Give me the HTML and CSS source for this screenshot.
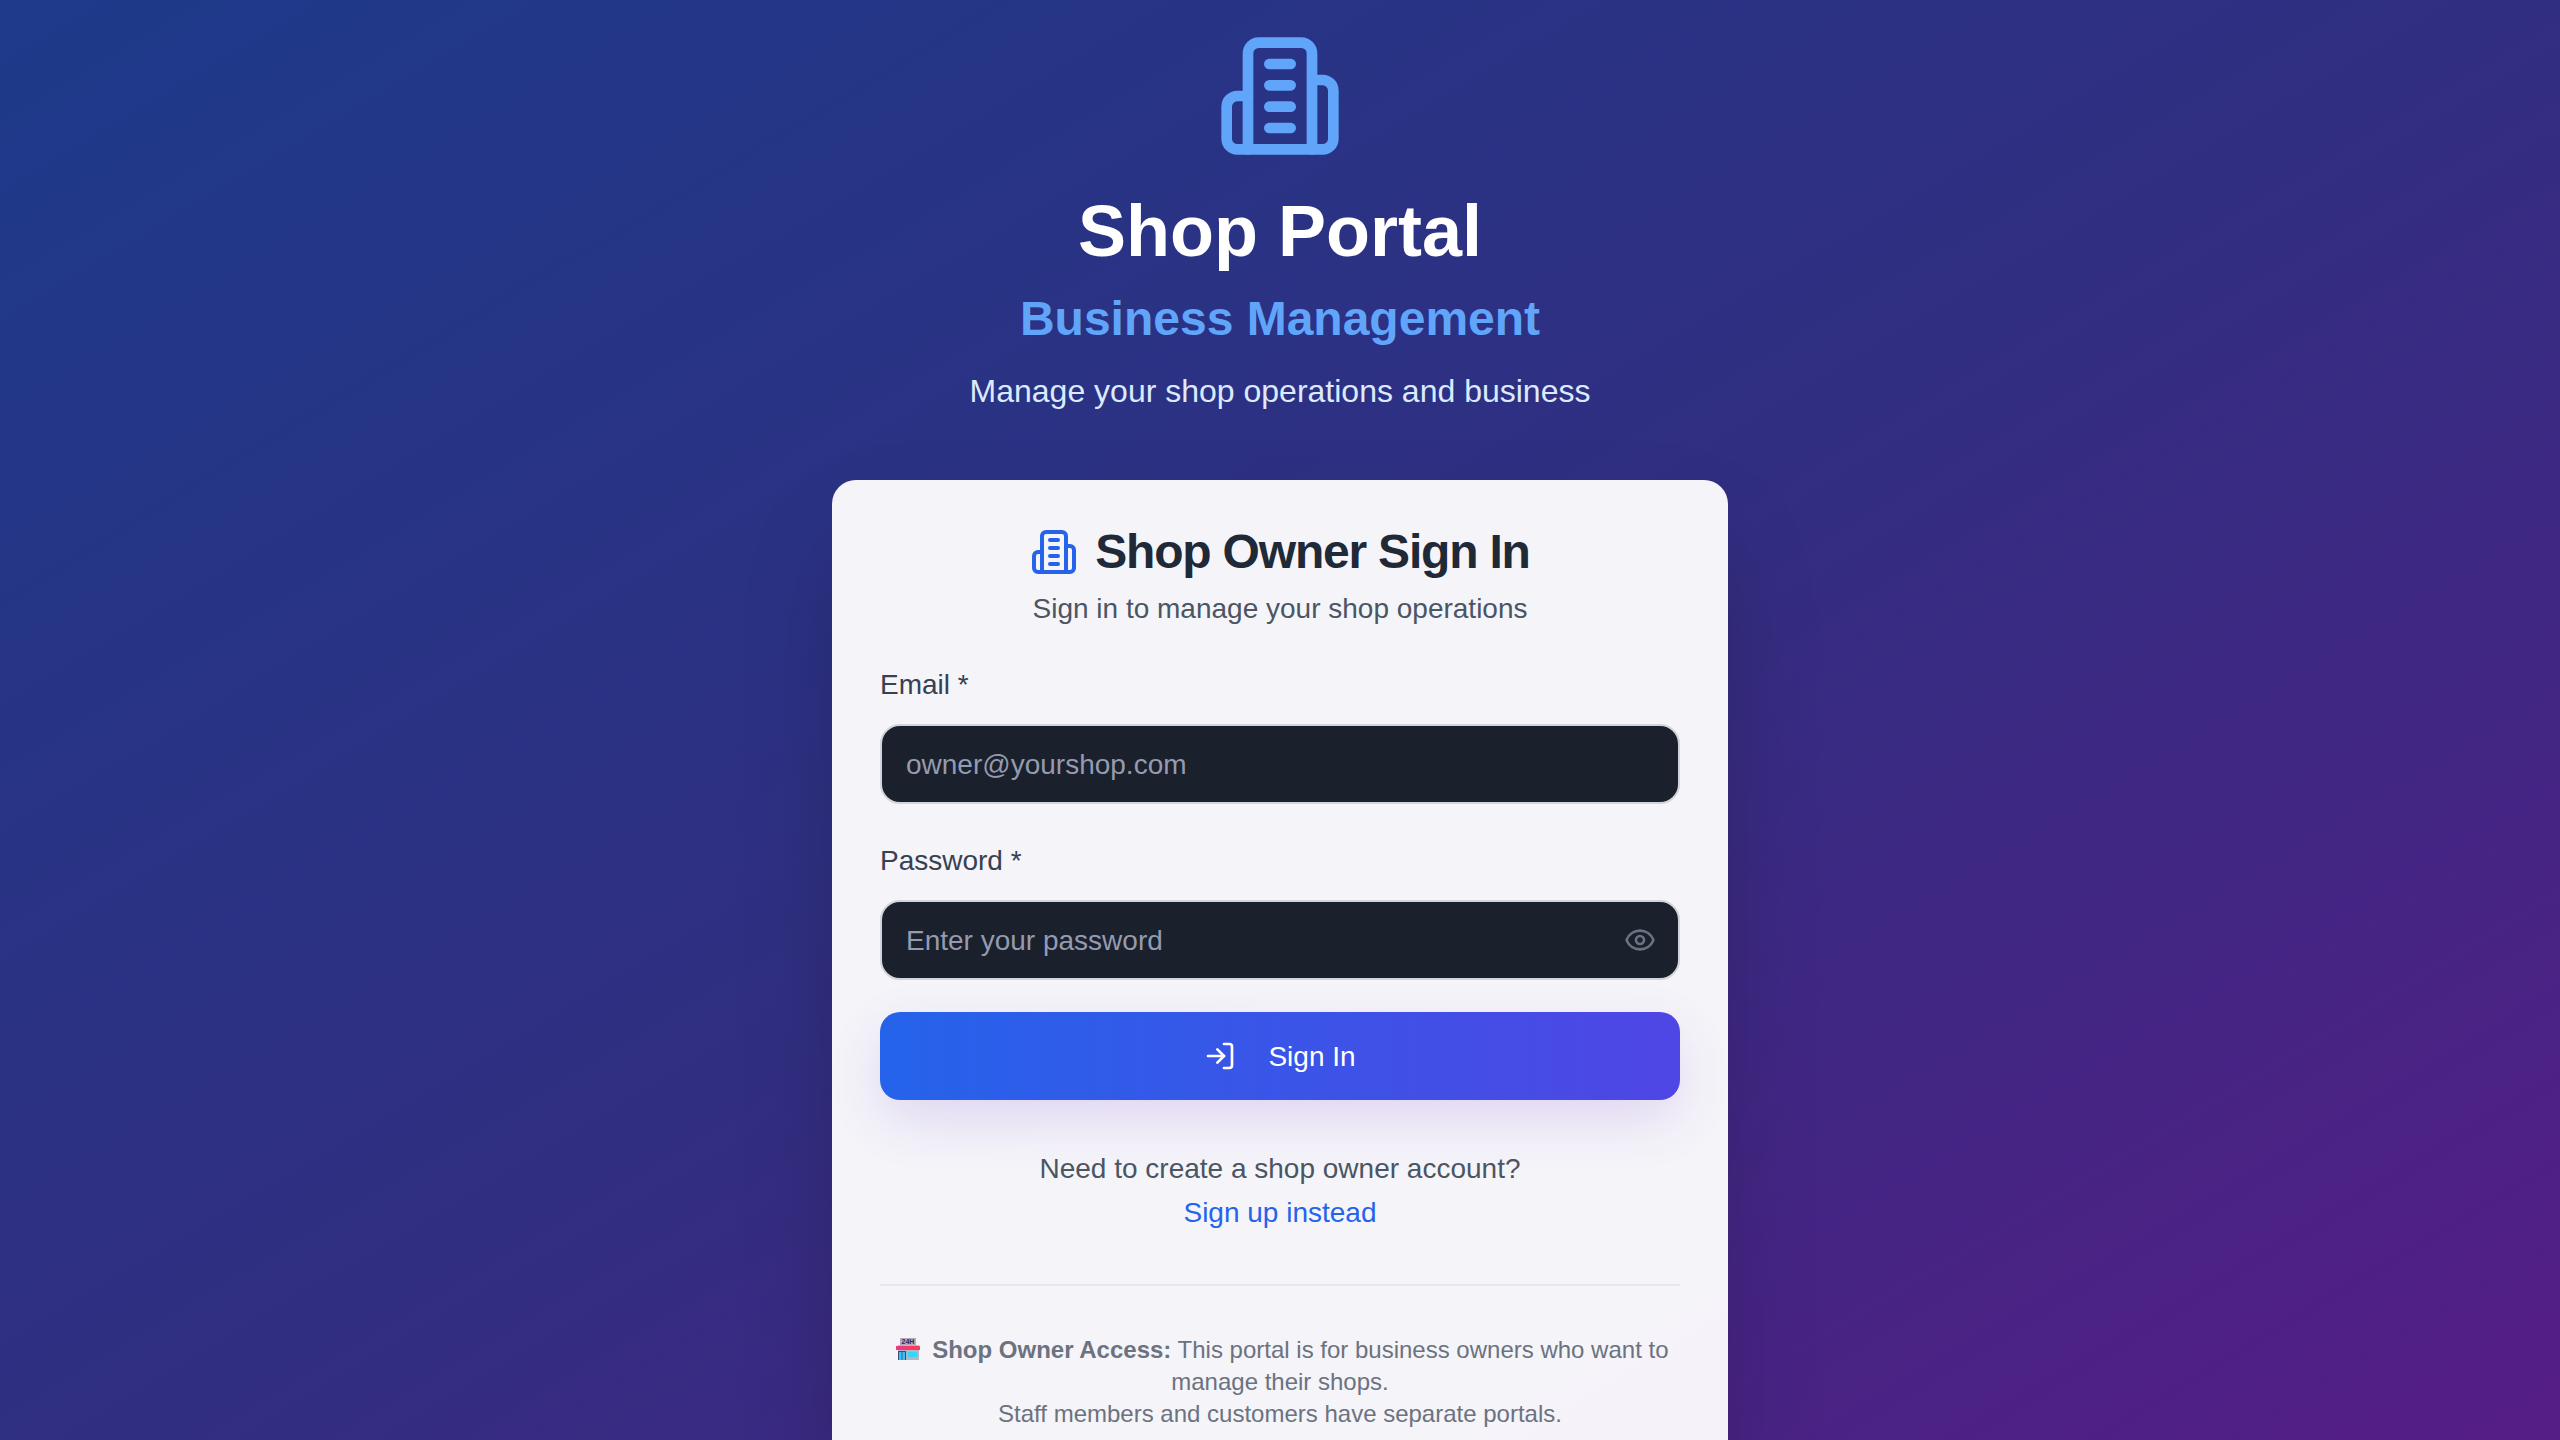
FILE: index.html
```html
<!DOCTYPE html>
<html lang="en">
<head>
<meta charset="utf-8">
<title>Shop Portal</title>
<link rel="stylesheet" href="styles.css">
</head>
<body>
<svg class="sprite" aria-hidden="true">
  <symbol id="building" viewBox="0 0 24 24">
    <path d="M6 22V4a2 2 0 0 1 2-2h8a2 2 0 0 1 2 2v18Z"/>
    <path d="M6 12H4a2 2 0 0 0-2 2v6a2 2 0 0 0 2 2h2"/>
    <path d="M18 9h2a2 2 0 0 1 2 2v9a2 2 0 0 1-2 2h-2"/>
    <path d="M10 6h4M10 10h4M10 14h4M10 18h4"/>
  </symbol>
</svg>
<main class="page">
  <header class="hero">
    <svg class="icon hero-icon"><use href="#building"/></svg>
    <h1 class="hero-title">Shop Portal</h1>
    <h2 class="hero-subtitle">Business Management</h2>
    <p class="hero-text">Manage your shop operations and business</p>
  </header>
  <section class="card">
    <h3 class="card-title"><svg class="icon card-icon"><use href="#building"/></svg><span>Shop Owner Sign In</span></h3>
    <p class="card-text">Sign in to manage your shop operations</p>
    <form class="form">
      <div class="field">
        <label class="label" for="email">Email *</label>
        <input class="input" id="email" type="email" placeholder="owner@yourshop.com">
      </div>
      <div class="field">
        <label class="label" for="password">Password *</label>
        <div class="password">
          <input class="input" id="password" type="password" placeholder="Enter your password">
          <svg class="icon eye" viewBox="0 0 24 24"><path d="M2.062 12.348a1 1 0 0 1 0-.696 10.75 10.75 0 0 1 19.876 0 1 1 0 0 1 0 .696 10.75 10.75 0 0 1-19.876 0"/><circle cx="12" cy="12" r="3"/></svg>
        </div>
      </div>
      <button class="submit" type="button">
        <svg class="icon submit-icon" viewBox="0 0 24 24"><path d="M15 3h4a2 2 0 0 1 2 2v14a2 2 0 0 1-2 2h-4"/><path d="m10 17 5-5-5-5"/><path d="M15 12H3"/></svg>
        <span class="submit-label">Sign In</span>
      </button>
    </form>
    <div class="switch">
      <p>Need to create a shop owner account?</p>
      <a class="link">Sign up instead</a>
    </div>
    <footer class="note">
      <p><svg class="store" viewBox="1 0 34 24">
          <rect x="7" y="8" width="21" height="15" fill="#b9b3c4"/>
          <rect x="9" y="1" width="16" height="7" fill="#b4acbd"/>
          <text x="17" y="6.8" text-anchor="middle" class="store-sign">24H</text>
          <rect x="5" y="9" width="24" height="4" rx="0.6" fill="#fb3a62"/>
          <rect x="5" y="9" width="12" height="4" rx="0.6" fill="#ee3a7c"/>
          <rect x="7" y="14" width="8" height="9" fill="#3d4a80"/>
          <rect x="8" y="15" width="2.6" height="8" fill="#35c3f5"/>
          <rect x="11.4" y="15" width="2.6" height="8" fill="#35c3f5"/>
          <rect x="17" y="15" width="9" height="5" fill="#38d6f5"/>
        </svg> <strong>Shop Owner Access:</strong> This portal is for business owners who want to manage their shops.</p>
      <p>Staff members and customers have separate portals.</p>
    </footer>
  </section>
</main>
</body>
</html>
```
FILE: styles.css
```css
* { box-sizing: border-box; margin: 0; padding: 0; }

body {
  height: 100vh;
  overflow: hidden;
  font-family: "Liberation Sans", Arial, sans-serif;
}

.sprite { display: none; }

.page {
  display: flex;
  flex-direction: column;
  align-items: center;
  height: 1540px;
  padding: 32px;
  background: linear-gradient(to bottom right, #1e3a8a, #312e81, #581c87);
}

.icon {
  fill: none;
  stroke: currentColor;
  stroke-width: 2;
  stroke-linecap: round;
  stroke-linejoin: round;
  flex-shrink: 0;
}

.hero {
  display: flex;
  flex-direction: column;
  align-items: center;
  margin-bottom: 65px;
}
.hero-icon { width: 128px; height: 128px; margin-bottom: 31px; color: #60a5fa; }
.hero-title { font-size: 72px; line-height: 80px; margin-bottom: 16px; color: #fff; }
.hero-subtitle { font-size: 48px; line-height: 64px; margin-bottom: 16px; color: #60a5fa; }
.hero-text { font-size: 32px; line-height: 48px; color: #dbeafe; }

.card {
  width: 896px;
  padding: 48px;
  border-radius: 24px;
  background: rgba(255, 255, 255, 0.95);
  box-shadow: 0 50px 100px -24px rgba(0, 0, 0, 0.25);
}
.card-title {
  display: flex;
  justify-content: center;
  gap: 17px;
  font-size: 48px;
  line-height: 48px;
  letter-spacing: -1.2px;
  color: #1f2937;
}
.card-icon { width: 48px; height: 48px; color: #2563eb; }
.card-text {
  margin-top: 13px;
  font-size: 28px;
  line-height: 40px;
  text-align: center;
  color: #4b5563;
}

.form { display: flex; flex-direction: column; gap: 33px; margin-top: 32px; }
.field { display: flex; flex-direction: column; gap: 15px; }
.label { font-size: 28px; line-height: 48px; color: #374151; }
.input {
  display: block;
  width: 100%;
  height: 80px;
  padding: 2px 24px 0;
  border: 2px solid #d1d5db;
  border-radius: 20px;
  background: #1a202c;
  font: 28px "Liberation Sans", Arial, sans-serif;
}
.input::placeholder { color: #949bb0; opacity: 1; }
.password { position: relative; }
.eye { position: absolute; top: 24px; right: 24px; width: 32px; height: 32px; color: #6b7280; }

.submit {
  display: flex;
  align-items: center;
  justify-content: center;
  gap: 32px;
  height: 88px;
  margin-top: -1px;
  border: 0;
  border-radius: 20px;
  background: linear-gradient(to right, #2563eb, #4f46e5);
  box-shadow: 0 20px 56px -6px rgba(118, 58, 205, 0.19);
  color: #fff;
  font: 28px "Liberation Sans", Arial, sans-serif;
}
.submit-icon { width: 32px; height: 32px; }
.submit-label { padding-top: 2px; }

.switch {
  display: flex;
  flex-direction: column;
  align-items: center;
  gap: 4px;
  margin-top: 49px;
  font-size: 28px;
  line-height: 40px;
  color: #4b5563;
}
.link { color: #2563eb; }

.note {
  margin-top: 51px;
  padding-top: 48px;
  border-top: 2px solid #e5e7eb;
  font-size: 24px;
  line-height: 32px;
  text-align: center;
  color: #6b7280;
}
.store { width: 34px; height: 24px; vertical-align: -3px; }
.store-sign { font: bold 7px "Liberation Sans", Arial, sans-serif; fill: #36234f; }
```
